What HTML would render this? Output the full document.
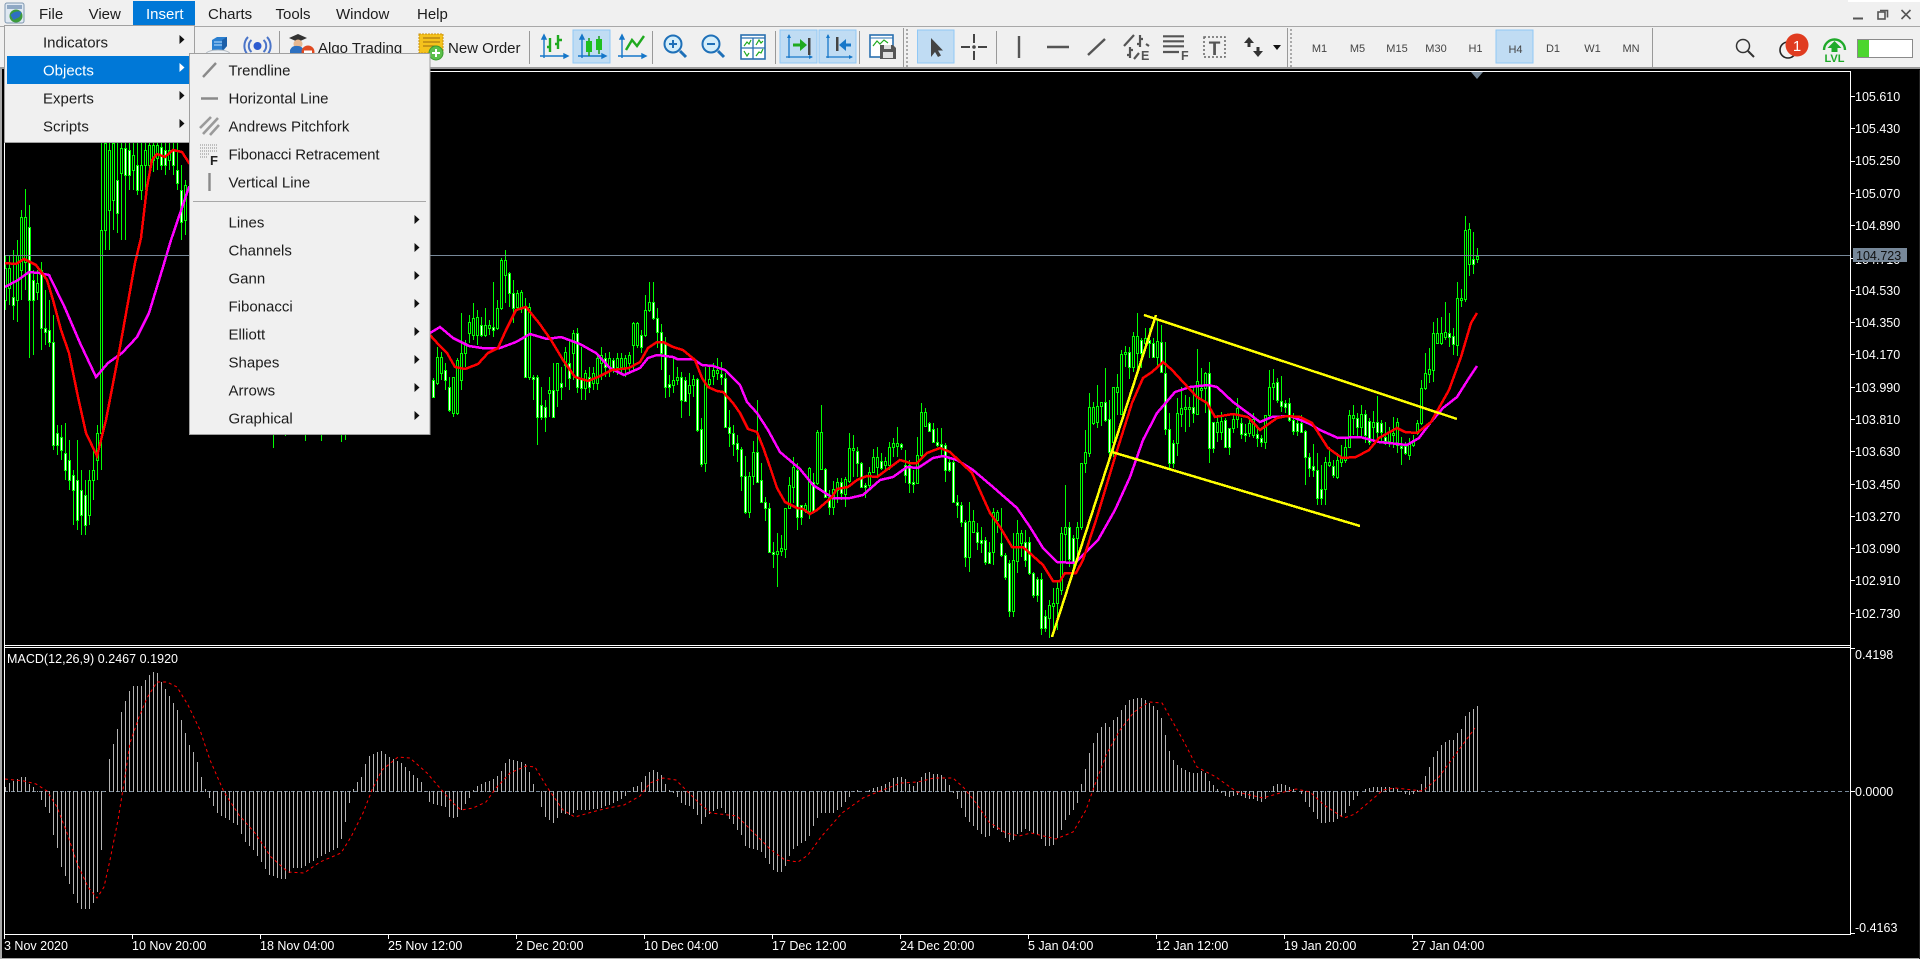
<!DOCTYPE html>
<html lang="en"><head><meta charset="utf-8"><title>MetaTrader</title>
<style>
html,body{margin:0;padding:0;width:1920px;height:959px;overflow:hidden;background:#000}
svg{display:block;position:absolute;left:0;top:0}
text{font-family:"Liberation Sans",sans-serif;white-space:pre}
.m{font-size:15px;fill:#1c1c1c}
.w{font-size:15px;fill:#fff}
.a{font-size:12.5px;fill:#fff}
.f{font-size:11px;fill:#444;text-anchor:middle}
.b{fill:none;stroke:#2a74b4;stroke-width:1.5}
</style></head><body>
<svg xmlns="http://www.w3.org/2000/svg" width="1920" height="959" viewBox="0 0 1920 959">
<defs>
<g id="ax" fill="none" stroke="#1677c9" stroke-width="1.4"><path d="M4 3V25M0 23H27"/><path d="M2 6L4 2L6 6ZM24 21L28 23L24 25Z" fill="#1677c9"/></g>
</defs>
<rect width="1920" height="959" fill="#000"/>
<g id="c"></g>

<!-- frame -->
<g shape-rendering="crispEdges" fill="#fff">
<rect x="4" y="71" width="1847" height="1"/>
<rect x="4" y="71" width="1" height="864"/>
<rect x="4" y="645" width="1846" height="1"/>
<rect x="4" y="647" width="1846" height="1"/>
<rect x="4" y="934" width="1847" height="1"/>
<rect x="1850" y="71" width="1" height="864"/>
<path d="M1851 96h4v1h-4zM1851 128h4v1h-4zM1851 161h4v1h-4zM1851 193h4v1h-4zM1851 225h4v1h-4zM1851 258h4v1h-4zM1851 290h4v1h-4zM1851 322h4v1h-4zM1851 354h4v1h-4zM1851 387h4v1h-4zM1851 419h4v1h-4zM1851 451h4v1h-4zM1851 484h4v1h-4zM1851 516h4v1h-4zM1851 548h4v1h-4zM1851 580h4v1h-4zM1851 613h4v1h-4zM1851 648h4v1h-4zM1851 791h4v1h-4zM1851 933h4v1h-4z"/>
<path d="M4 935h1v4h-1zM132 935h1v4h-1zM260 935h1v4h-1zM388 935h1v4h-1zM516 935h1v4h-1zM644 935h1v4h-1zM772 935h1v4h-1zM900 935h1v4h-1zM1028 935h1v4h-1zM1156 935h1v4h-1zM1284 935h1v4h-1zM1412 935h1v4h-1z"/>
</g>
<rect x="0" y="0" width="2" height="959" fill="#a8a8a8"/>
<rect x="0" y="958" width="1920" height="1" fill="#a8a8a8"/>
<rect x="1919" y="70" width="1" height="889" fill="#222"/>
<polygon points="1471,72 1483,72 1477,79" fill="#778899"/>

<!-- axis labels -->
<g class="a">
<text class="a" x="1855" y="101">105.610</text><text class="a" x="1855" y="133">105.430</text><text class="a" x="1855" y="165">105.250</text><text class="a" x="1855" y="198">105.070</text><text class="a" x="1855" y="230">104.890</text><text class="a" x="1855" y="264">104.710</text><text class="a" x="1855" y="295">104.530</text><text class="a" x="1855" y="327">104.350</text><text class="a" x="1855" y="359">104.170</text><text class="a" x="1855" y="392">103.990</text><text class="a" x="1855" y="424">103.810</text><text class="a" x="1855" y="456">103.630</text><text class="a" x="1855" y="489">103.450</text><text class="a" x="1855" y="521">103.270</text><text class="a" x="1855" y="553">103.090</text><text class="a" x="1855" y="585">102.910</text><text class="a" x="1855" y="618">102.730</text>
<rect x="1853" y="248" width="54" height="14" fill="#778899"/>
<text x="1856" y="260" style="font-size:12.5px;fill:#111">104.723</text>
<text class="a" x="1855" y="659">0.4198</text><text class="a" x="1855" y="796">0.0000</text><text class="a" x="1855" y="932">-0.4163</text>
<text class="a" x="7" y="663" textLength="171">MACD(12,26,9) 0.2467 0.1920</text>
<text class="a" x="4" y="950">3 Nov 2020</text><text class="a" x="132" y="950">10 Nov 20:00</text><text class="a" x="260" y="950">18 Nov 04:00</text><text class="a" x="388" y="950">25 Nov 12:00</text><text class="a" x="516" y="950">2 Dec 20:00</text><text class="a" x="644" y="950">10 Dec 04:00</text><text class="a" x="772" y="950">17 Dec 12:00</text><text class="a" x="900" y="950">24 Dec 20:00</text><text class="a" x="1028" y="950">5 Jan 04:00</text><text class="a" x="1156" y="950">12 Jan 12:00</text><text class="a" x="1284" y="950">19 Jan 20:00</text><text class="a" x="1412" y="950">27 Jan 04:00</text>
</g>

<!-- menu bar + toolbar -->
<rect x="0" y="0" width="1920" height="68" fill="#f0f0f0"/>
<rect x="1848" y="0" width="72" height="2" fill="#fff"/>
<rect x="0" y="26" width="1920" height="1" fill="#a8a8a8"/>
<rect x="0" y="67" width="1920" height="2" fill="#9a9a9a"/>
<rect x="133" y="1" width="62" height="24" fill="#0078d7"/>
<g>
<rect x="5" y="3" width="19" height="20" rx="2" fill="#dfe8f2" stroke="#7f97b0"/>
<rect x="7" y="5" width="15" height="4" fill="#8fa8c4"/>
<circle cx="16" cy="16" r="6.500" fill="#3c9a3c"/><path d="M10.500 15q5-5 11-3l-2 5-6 3z" fill="#2f6fc2"/>
</g>
<text class="m" x="39" y="19">File</text><text class="m" x="88.6" y="19">View</text><text class="w" x="146" y="19">Insert</text><text class="m" x="208" y="19">Charts</text><text class="m" x="275.5" y="19">Tools</text><text class="m" x="336" y="19">Window</text><text class="m" x="417" y="19">Help</text>

<!-- window buttons -->
<g fill="none" stroke="#555" stroke-width="1.6">
<path d="M1853 18.500h10" stroke-width="2"/>
<rect x="1878" y="12" width="7" height="7"/><path d="M1880 10.500h7.500v7"/>
<path d="M1901.500 10l9 9M1910.500 10l-9 9"/>
</g>

<!-- left toolbar -->
<g>
<path d="M212 40l5-3h10v9l-4 5h-11z" fill="#2a7fd0"/><path d="M214 42h8M214 45h8" stroke="#bfe0ff"/><path d="M222 40l5-3v9l-5 5z" fill="#1c5fa8"/>
<ellipse cx="218" cy="54" rx="12" ry="4" fill="#eef2f6" stroke="#b0b8c0"/>
<g fill="none" stroke="#4a74c8" stroke-width="2"><path d="M248 37a13 13 0 0 0 0 18M267 37a13 13 0 0 1 0 18M251.500 40a8 8 0 0 0 0 12M263.500 40a8 8 0 0 1 0 12"/></g>
<circle cx="257.500" cy="46" r="4" fill="#2d5bd0"/>
<rect x="279" y="31" width="1" height="33" fill="#999"/>
<path d="M289 38l9-4 9 4-9 4z" fill="#333"/><circle cx="298" cy="44" r="4.500" fill="#e8b890"/><path d="M290 56v-6q2-5 8-4 5 0 6 6v4z" fill="#2d70c0"/>
<circle cx="308" cy="52" r="6.500" fill="#e04a20"/><rect x="304" y="50.500" width="8" height="3" fill="#fff"/>
<text class="m" x="318" y="53">Algo Trading</text>
<rect x="419" y="34" width="24" height="19" fill="#f5c21c" stroke="#c89010" stroke-dasharray="2 1"/><path d="M423 38h17M423 42h17M423 46h14" stroke="#9a6a10"/>
<circle cx="436" cy="53" r="7" fill="#5cc04a" stroke="#3a9a30"/><path d="M432 53h8M436 49v8" stroke="#fff" stroke-width="2"/>
<text class="m" x="448" y="53">New Order</text>
<rect x="529" y="31" width="1" height="33" fill="#999"/>
<use href="#ax" x="540" y="33"/>
<path d="M550 38v14M547 47h3M558 35v14M558 40h4M555 44h3" stroke="#1faa1f" stroke-width="2.400" fill="none"/>
<rect x="573" y="30" width="37" height="33" fill="#c0dcf3" stroke="#90c8f6"/>
<use href="#ax" x="578" y="33"/>
<path d="M589 38v18M599 36v18" stroke="#1a9a1a" stroke-width="1.500"/><rect x="586" y="41" width="6" height="11" fill="#1fbf1f"/><rect x="596" y="39" width="6" height="11" fill="#1fbf1f"/>
<use href="#ax" x="618" y="33"/>
<path d="M626 50l6-10 5 6 7-10" stroke="#1faa1f" stroke-width="2.400" fill="none"/>
<rect x="652" y="31" width="1" height="33" fill="#999"/>
<circle cx="673" cy="44" r="8.500" fill="#d4eefa" stroke="#1e70b8" stroke-width="2"/><path d="M669 44h8M673 40v8" stroke="#1e70b8" stroke-width="2"/><path d="M680 51l6 6" stroke="#1e70b8" stroke-width="3"/>
<circle cx="711" cy="44" r="8.500" fill="#d4eefa" stroke="#1e70b8" stroke-width="2"/><path d="M707 44h8" stroke="#1e70b8" stroke-width="2"/><path d="M718 51l6 6" stroke="#1e70b8" stroke-width="3"/>
<rect x="741" y="35" width="24" height="24" fill="#fff" stroke="#2a70b0" stroke-width="1.600"/><path d="M741 38h24M753 38v21M741 48h24" stroke="#2a70b0" stroke-width="1.300"/><path d="M744 46l3-4 2 2 2-4M756 45l3-5 2 3 2-2M744 51l3 5 2-3M756 56l3-4 2 1 2-4" stroke="#1faa1f" fill="none" stroke-width="1.200"/>
<rect x="775" y="31" width="1" height="33" fill="#999"/>
<rect x="780" y="30" width="37" height="33" fill="#c0dcf3" stroke="#90c8f6"/>
<rect x="819" y="30" width="37" height="33" fill="#c0dcf3" stroke="#90c8f6"/>
<path d="M789 35v23M786 57h26M826 57h26M828 35v23" stroke="#1677c9" stroke-width="1.300"/><path d="M787 38l2-4 2 4zM809 55l4 2-4 2zM826 38l2-4 2 4zM849 55l4 2-4 2z" fill="#1677c9"/>
<path d="M793 45h9" stroke="#1faa1f" stroke-width="3"/><path d="M800 39l7 6-7 6z" fill="#1faa1f"/><rect x="808" y="38" width="2.500" height="17" fill="#444"/>
<rect x="836" y="37" width="2.500" height="14" fill="#444"/><path d="M843 45h8" stroke="#1677c9" stroke-width="3"/><path d="M846 39l-7 6 7 6z" fill="#1677c9"/>
<rect x="859" y="31" width="1" height="33" fill="#999"/>
<rect x="870" y="35" width="23" height="22" fill="#fff" stroke="#2a70b0" stroke-width="1.600"/><path d="M870 38h23" stroke="#2a70b0"/><path d="M873 46l4-5 3 3 4-4 4 3" stroke="#1faa1f" fill="none" stroke-width="1.200"/>
<path d="M880 45h13l3 3v11h-16z" fill="#555"/><rect x="884" y="45" width="7" height="4" fill="#ddd"/><rect x="883" y="52" width="10" height="6" fill="#ddd"/>
<rect x="903" y="28" width="1" height="39" fill="#999"/>
<path d="M907 29v38" stroke="#aaa" stroke-width="2" stroke-dasharray="2 2"/>
<rect x="917.500" y="30" width="36.500" height="33" fill="#c0dcf3" stroke="#90c8f6"/>
<path d="M931 38v19l4-5 3 5 3-1.500-3-5h5z" fill="#444"/>
<path d="M961 47h9M978 47h9M974 34v9M974 51v9" stroke="#444" stroke-width="2"/><circle cx="974" cy="47" r="1.800" fill="#444"/>
<rect x="996" y="31" width="1" height="33" fill="#999"/>
<path d="M1019 36v22M1047 47h22M1088 55l17-16" stroke="#555" stroke-width="2.400" fill="none"/>
<path d="M1124 46l10-11M1140 35v12M1137 44h3M1140 39h3M1146 44l3 2M1130 47v11M1127 55h3M1130 50h3M1134 59l5-6" stroke="#555" stroke-width="2.200" fill="none"/>
<text x="1141" y="60" style="font-size:12.5px;font-weight:bold;fill:#555">E</text>
<path d="M1163 36.300h21M1163 41.300h21M1163 46.300h21M1163 52h16" stroke="#555" stroke-width="2.200"/>
<text x="1181" y="60" style="font-size:12.5px;font-weight:bold;fill:#555">F</text>
<rect x="1204" y="37" width="21" height="20" fill="none" stroke="#666" stroke-width="1.500" stroke-dasharray="2 2"/>
<text x="1214.500" y="55" text-anchor="middle" style="font-size:19px;font-weight:bold;fill:#555">T</text>
<path d="M1249 47v-6" stroke="#333" stroke-width="3"/><path d="M1244 43l5-6 5 6z" fill="#333"/>
<path d="M1258 47v6" stroke="#333" stroke-width="3"/><path d="M1253 51l5 6 5-6z" fill="#333"/>
<path d="M1273 45h8l-4 5z" fill="#111"/>
<rect x="1287" y="28" width="1" height="39" fill="#999"/>
<path d="M1291 29v38" stroke="#aaa" stroke-width="2" stroke-dasharray="2 2"/>
<rect x="1496" y="30" width="37" height="33" fill="#c0dcf3" stroke="#90c8f6"/>
<text class="f" x="1319.500" y="52">M1</text><text class="f" x="1357.500" y="52">M5</text><text class="f" x="1397" y="52">M15</text><text class="f" x="1436" y="52">M30</text><text class="f" x="1475.500" y="52">H1</text><text class="f" x="1515.500" y="53">H4</text><text class="f" x="1553" y="52">D1</text><text class="f" x="1592.500" y="52">W1</text><text class="f" x="1631" y="52">MN</text>
<rect x="1652" y="28" width="1" height="39" fill="#999"/>
<circle cx="1743" cy="46" r="6.500" fill="none" stroke="#333" stroke-width="1.500"/><path d="M1748 51l6 6" stroke="#333" stroke-width="2"/>
<circle cx="1788" cy="50" r="8" fill="none" stroke="#222" stroke-width="1.600"/>
<circle cx="1797" cy="45" r="11.500" fill="#e03c20"/>
<text x="1797" y="51" text-anchor="middle" style="font-size:15px;fill:#fff">1</text>
<path d="M1824 50a10.500 10.500 0 0 1 21 0" fill="none" stroke="#1faa2a" stroke-width="2.400"/>
<path d="M1834.500 41l7 7h-4v4h-6v-4h-4z" fill="#1faa2a"/>
<text x="1834.500" y="62" text-anchor="middle" style="font-size:11px;font-weight:bold;fill:#1faa2a">LVL</text>
<rect x="1857.500" y="39.500" width="55" height="18" fill="#fff" stroke="#8a8a8a"/>
<rect x="1858" y="40" width="11" height="17" fill="#4cd62e"/>
</g>

<!-- Insert menu -->
<rect x="4.500" y="25.500" width="190" height="117" fill="#f0f0f0" stroke="#a0a0a0"/>
<rect x="7" y="56" width="182" height="28" fill="#0078d7"/>
<text class="m" x="43" y="47.500">Indicators</text>
<text class="w" x="43" y="75.500">Objects</text>
<text class="m" x="43" y="103.500">Experts</text>
<text class="m" x="43" y="131.500">Scripts</text>
<path d="M179.500 35l5 4.500-5 4.500zM179.500 91l5 4.500-5 4.500zM179.500 119l5 4.500-5 4.500z" fill="#111"/>
<path d="M179.500 63l5 4.500-5 4.500z" fill="#fff"/>

<!-- Objects submenu -->
<rect x="189.500" y="53.500" width="240.500" height="381" fill="#f0f0f0" stroke="#a0a0a0"/>
<g>
<path d="M203 77l13-14" stroke="#8a8a8a" stroke-width="2.400"/>
<path d="M201 98.500h17" stroke="#8a8a8a" stroke-width="2.400"/>
<path d="M200 128l11-11M203 134l15-16M210 135l9-10" stroke="#9a9a9a" stroke-width="2.600"/>
<path d="M200 145h18M200 148h18M200 151h18M200 154h10M200 157h8" stroke="#8a8a8a" stroke-dasharray="1 1"/>
<text x="210" y="165" style="font-size:13px;font-weight:bold;fill:#222">F</text>
<path d="M209.500 173v18" stroke="#8a8a8a" stroke-width="2.400"/>
</g>
<text class="m" x="228.500" y="75.500">Trendline</text>
<text class="m" x="228.500" y="103.500" textLength="100">Horizontal Line</text>
<text class="m" x="228.500" y="131.500">Andrews Pitchfork</text>
<text class="m" x="228.500" y="159.500" textLength="151">Fibonacci Retracement</text>
<text class="m" x="228.500" y="187.500">Vertical Line</text>
<rect x="193" y="201" width="233" height="1" fill="#a8a8a8"/>
<text class="m" x="228.500" y="227.500">Lines</text>
<text class="m" x="228.500" y="255.500">Channels</text>
<text class="m" x="228.500" y="283.500">Gann</text>
<text class="m" x="228.500" y="311.500">Fibonacci</text>
<text class="m" x="228.500" y="339.500">Elliott</text>
<text class="m" x="228.500" y="367.500">Shapes</text>
<text class="m" x="228.500" y="395.500">Arrows</text>
<text class="m" x="228.500" y="423.500">Graphical</text>
<path d="M414.500 215l5 4.500-5 4.500zM414.500 243l5 4.500-5 4.500zM414.500 271l5 4.500-5 4.500zM414.500 299l5 4.500-5 4.500zM414.500 327l5 4.500-5 4.500zM414.500 355l5 4.500-5 4.500zM414.500 383l5 4.500-5 4.500zM414.500 411l5 4.500-5 4.500z" fill="#111"/>
</svg>
<script>
(function(){
var s='';
function r(x,y,w,h,f){if(h<=0)return;s+='<rect x="'+x+'" y="'+y+'" width="'+w+'" height="'+h+'" fill="'+f+'"/>';}
var prev=null;
function C(x0,off,k,d){
 var a=d.trim().split(/\s+/);
 for(var i=0;i<a.length;i++){
  var v=a[i].split(',').map(function(n){return Math.round(off+(+n)*k);});
  var x=x0+i*4,hi=v[0],t=v[1],b=v[2],lo=v[3];
  if(b-t<2)b=t+2;
  var mid=(t+b)/2,fill=(prev!==null&&mid>prev)?'#fff':'#000';prev=mid;
  r(x,hi,1,lo-hi,'#0f0');
  r(x-1,t,3,b-t+1,'#0f0');
  r(x,t+1,1,b-t-1,fill);
 }
}
C(5,0,1,"255,268,300,310 255,268,288,305 250,297,305,320 240,255,300,322 210,217,270,300 189,217,262,290 205,227,300,358 270,280,300,355 270,283,292,300 262,270,328,350 290,328,332,345 300,330,342,347 315,342,445,450 425,433,445,455 425,437,450,460 423,453,470,480 440,460,480,490 470,475,490,525 440,480,520,530 470,490,515,535 480,495,525,535 470,480,515,525 450,470,480,500 425,433,460,480 140,230,433,470 140,143,230,250 140,150,210,250 140,143,200,230 140,180,213,233 140,148,173,240 140,148,175,240 140,150,175,190 140,155,170,190 140,165,190,195 140,165,190,200 140,150,165,190 140,145,165,175 140,145,160,172 140,145,158,170 140,147,165,170 140,150,165,175 140,150,160,170 140,150,165,175 140,170,183,190 165,190,222,240 180,185,220,235");
[[273,448],[285,436],[305,441],[321,441],[341,442],[345,440]].forEach(function(p){r(p[0],400,1,p[1]-400,'#0f0');});
C(433,220,1/3,"475,480,530,535 380,410,490,495 395,410,460,480 430,450,480,510 470,500,570,575 470,470,580,590 415,420,580,585 280,400,480,510 360,370,400,440 285,305,340,370 250,295,345,360 270,290,345,375 290,315,345,350 265,315,345,350 300,315,325,345 185,320,330,350 240,265,325,330 115,120,265,270 90,120,165,250 155,160,220,260 180,220,265,310 210,220,262,270 210,215,265,280 235,260,470,475 250,260,470,480 465,470,472,540 465,470,590,675 500,555,590,600 540,560,590,635 470,510,520,590 430,510,590,595 430,430,510,560 440,490,500,540 380,395,435,500 360,430,475,510 330,340,400,480 325,340,500,520 380,475,505,540 450,460,505,540 440,470,500,520 440,460,490,510 400,415,490,510 380,405,430,480 400,415,440,470 395,415,440,470 415,420,445,460 400,415,440,465 400,415,440,465 405,415,440,470 395,405,430,460 305,310,375,450 305,310,375,385");
C(641,270,1/3,"180,195,230,250 75,120,195,200 35,95,120,125 35,97,145,150 115,145,185,235 162,185,250,300 200,220,350,385 315,343,350,380 262,330,345,370 290,320,330,345 305,322,390,443 320,330,393,395 310,345,368,437 315,328,345,380 325,328,480,485 445,478,583,590 290,340,580,607 285,328,342,350 280,300,318,345 265,300,310,330 275,313,322,345 310,323,470,472 420,470,490,530 465,490,522,557 495,520,538,575 530,538,618,662 558,618,727,733 605,618,727,745 513,547,618,645 390,547,635,640 580,630,695,700 680,695,715,752 700,715,845,847 815,845,853,895 790,842,853,952 795,835,843,858 715,715,838,865 620,645,715,717 560,590,650,700 580,600,742,780 705,705,742,765 700,705,718,730 590,595,722,748 610,635,725,730 480,487,640,645 405,487,598,600 595,598,680,685 660,680,712,735 632,658,710,735 625,637,660,700 625,637,670,690 620,628,672,710 490,535,632,640 495,535,540,620 530,543,580,620 575,580,652,655 640,645,652,685 590,607,645,660 537,560,607,610 530,562,590,620 550,572,595,600 560,572,585,600 515,532,585,600 505,518,532,560 472,518,528,560 520,523,530,540 540,585,615,640 570,585,640,668 600,636,640,668 500,555,638,640 400,427,555,560 415,427,467,470 455,460,482,485 460,478,515,518 475,515,525,530 475,523,530,560 520,525,600,635 565,575,600,605 570,575,695,700 675,695,705,745 695,705,757,772 750,757,862,890 695,752,860,905 720,752,787,790 760,787,817,840 770,810,818,850 800,810,877,885 815,847,878,880 715,727,847,885 720,727,750,790");
C(1001,300,1/3,"625,730,765,770 760,765,830,840 780,790,932,950 700,780,932,950 660,700,782,820 690,700,728,770 690,725,780,800 712,727,820,825 815,820,885,895 830,838,885,905 820,838,985,1005 930,948,983,995 900,915,955,1015 865,908,918,1000 845,865,908,990 680,700,870,885 555,682,702,790 665,682,778,800 705,715,785,810 665,680,715,780 490,490,680,690 390,457,490,520 280,320,460,470 305,320,368,375 255,317,365,385 305,307,318,378 205,307,360,365 300,358,457,470 262,262,425,470 222,262,275,345 150,163,342,345 137,155,163,200 140,157,200,238 95,108,200,215 40,107,160,220 115,120,160,205 85,115,130,150 85,120,130,175 115,130,170,175 60,122,172,200 75,125,215,220 125,218,388,405 340,388,490,505 420,428,490,505 295,340,428,468 260,325,342,380 285,322,325,395 290,322,325,380 260,320,340,370 148,242,342,345 205,265,270,300 215,220,265,340 185,220,445,490 365,365,445,460 345,365,397,425 335,362,395,420 355,360,440,445 385,385,440,465 340,358,385,400 295,325,358,385 355,368,403,418 372,400,403,425 358,368,400,410 340,358,405,415 385,403,415,440 405,415,425,440 345,345,425,447 210,262,345,350 208,248,262,300 235,245,300,310 228,302,318,335 300,310,320,340 295,310,360,365 340,360,392,405 355,368,392,408 345,368,395,400 390,392,470,555 460,470,505,530 432,497,510,530 460,510,595,615");
C(1321,200,1/3,"795,868,895,915 770,785,868,915 740,785,795,800 780,797,825,835 760,780,830,838 735,770,785,800 710,740,780,790 630,645,740,745 615,645,655,705 640,655,680,710 615,642,682,710 630,642,705,730 655,663,725,735 632,665,680,720 588,665,695,720 660,670,695,725 665,710,722,735 680,695,722,740 650,700,705,745 655,665,735,760 710,738,741,795 725,738,760,765 715,730,765,780 705,720,735,740 660,668,700,705 540,565,670,675 460,520,565,570 445,508,522,550 365,400,510,545 355,400,428,430 350,398,430,435 305,395,410,420 340,400,410,440 385,408,433,465 245,295,435,467 268,295,298,322 48,90,298,305 70,88,193,228 95,178,193,222 145,168,178,188");
// MACD
function interp(k,x){for(var i=1;i<k.length;i++){if(x<=k[i][0]){var a=k[i-1],b=k[i];return a[1]+(b[1]-a[1])*(x-a[0])/(b[0]-a[0]);}}return k[k.length-1][1];}
var H="5 787,8 783,24 775,28 783,36 790,41 800,49 813,53 835,57 848,61 867,65 876,69 884,77 903,81 909,89 909,93 903,97 892,101 850,104 801,108 763,112 747,116 734,120 715,124 703,128 693,132 686,141 686,145 680,149 675,153 672,157 673,161 682,165 689,171 700,176 708,180 717,184 730,188 743,193 752,197 762,201 777,205 789,209 798,217 813,225 818,237 825,245 842,253 850,261 862,269 875,284 880,292 868,302 868,314 860,326 853,339 847,344 827,348 807,352 791,356 783,360 780,364 766,368 757,372 754,381 751,386 755,392 759,400 762,408 770,412 774,420 780,424 789,428 802,436 805,445 807,449 817,456 819,461 810,468 800,472 791,477 786,486 782,494 779,500 773,504 764,510 758,516 761,524 762,528 768,532 782,537 791,541 807,545 817,553 823,561 813,569 815,577 810,588 810,600 808,608 805,620 800,628 793,632 787,637 786,640 783,648 772,652 770,660 773,664 782,668 789,676 795,680 803,692 807,697 815,700 826,704 818,711 812,720 807,724 812,732 823,741 835,745 846,749 848,760 851,768 862,772 870,780 873,784 869,788 858,793 849,800 843,808 839,812 828,816 819,821 813,833 813,842 806,848 798,852 792,856 790,863 792,871 789,880 786,888 783,892 778,901 777,905 779,912 787,917 782,924 773,928 772,934 774,941 775,948 782,952 792,957 799,961 808,965 817,969 822,976 829,984 837,988 838,993 828,1002 833,1008 842,1012 842,1016 835,1025 829,1033 833,1040 837,1045 846,1052 846,1056 840,1061 830,1065 820,1069 815,1073 810,1077 803,1080 787,1084 773,1088 756,1092 745,1096 735,1101 727,1105 723,1109 727,1113 720,1117 717,1122 708,1126 704,1130 699,1143 698,1147 701,1155 707,1160 714,1164 730,1168 748,1172 758,1176 764,1180 767,1185 770,1189 772,1195 774,1204 770,1208 780,1212 784,1217 789,1223 795,1229 797,1237 795,1246 798,1252 799,1261 802,1267 797,1271 787,1275 784,1284 784,1288 787,1296 790,1300 792,1304 800,1308 806,1312 810,1316 818,1320 823,1332 822,1336 820,1344 815,1348 807,1352 801,1356 797,1360 792,1367 788,1375 787,1383 787,1391 787,1399 790,1404 794,1412 795,1416 792,1421 784,1425 776,1428 769,1432 759,1436 752,1440 746,1445 742,1449 740,1453 740,1457 733,1461 729,1465 716,1469 712,1473 709,1477 706".split(',').map(function(p){return p.split(' ').map(Number);});
s+='<path d="M4 791.5H1850" stroke="#778899" stroke-dasharray="4 3" shape-rendering="crispEdges"/>';
for(var x=5;x<=1477;x+=4){var y=Math.round(interp(H,x));if(y<791)r(x,y,1,791-y+1,'#b4b4b4');else if(y>791)r(x,791,1,y-791,'#b4b4b4');}
function L(p,c,w,e){s+='<polyline points="'+p+'" fill="none" stroke="'+c+'" stroke-width="'+w+'" '+(e||'')+'/>';}
L("5,779 24,781 36,784 47,791 57,807 67,833 77,863 88,887 97,898 104,887 110,860 118,820 124,783 130,743 139,717 147,698 157,682 167,682 177,687 188,705 200,730 210,760 224,792 239,815 255,833 271,857 288,872 304,873 320,862 341,853 351,837 363,813 372,790 382,770 398,757 410,758 427,773 439,787 453,803 461,810 473,808 486,802 496,788 510,773 526,766 535,767 547,787 563,810 575,817 592,812 608,808 624,805 640,796 650,783 663,778 676,780 686,790 699,803 711,813 737,816 751,830 770,849 785,860 798,862 808,855 821,837 842,813 863,798 880,791 901,783 918,782 934,778 953,778 964,788 976,803 989,822 1006,833 1019,836 1031,833 1056,839 1073,832 1086,810 1094,787 1107,753 1120,730 1134,712 1149,702 1162,703 1170,717 1183,740 1197,767 1216,777 1237,792 1263,798 1280,793 1296,789 1310,792 1324,805 1344,818 1355,814 1375,797 1383,790 1395,788 1423,791 1439,777 1455,755 1475,728","#f00",1,'stroke-dasharray="3 3"');
L("5,287 18,280 29,272 39,273 49,275 65,308 80,343 96,377 108,363 122,353 137,337 149,313 163,267 171,240 189,187 300,150 430,333 440,327 453,338 469,346 482,348 500,348 516,342 530,334 547,339 561,337 580,344 596,353 610,368 624,375 640,368 648,358 657,355 673,357 677,359 693,359 702,365 713,366 725,370 740,385 747,402 757,413 768,430 780,452 800,469 813,485 833,498 850,498 863,495 880,480 893,477 907,467 918,468 933,458 943,456 957,460 973,470 993,487 1017,508 1030,527 1043,548 1057,562 1075,563 1098,540 1115,510 1130,477 1143,440 1157,413 1175,392 1190,387 1208,385 1217,387 1233,402 1260,422 1272,417 1290,416 1310,424 1320,430 1338,438 1360,437 1379,442 1407,445 1419,438 1431,422 1443,408 1457,397 1469,378 1477,366","#f0f",2.5,'shape-rendering="crispEdges"');
L("5,263 16,264 24,259 36,265 47,280 53,300 61,330 69,353 78,397 86,433 97,456 106,420 120,347 135,263 141,238 147,187 152,160 157,154 165,157 173,150 182,152 189,163 300,150 430,335 439,345 447,353 455,367 465,369 478,364 488,353 498,348 506,330 516,310 526,307 539,323 551,340 563,360 575,377 588,381 598,377 612,370 629,368 640,362 648,348 657,342 663,342 673,347 683,350 695,360 702,378 708,387 717,391 723,392 733,403 740,413 748,429 757,432 763,447 770,467 777,488 785,502 797,508 803,509 810,514 817,510 832,497 837,489 848,487 857,480 867,476 877,477 900,460 910,463 917,463 927,453 940,448 950,452 972,473 990,513 1000,527 1012,547 1023,547 1043,565 1053,581 1060,581 1065,573 1076,573 1083,560 1097,517 1115,457 1132,403 1143,378 1152,372 1163,362 1172,370 1183,382 1197,397 1207,403 1215,417 1233,414 1248,417 1260,430 1277,418 1287,416 1300,417 1312,423 1328,448 1342,458 1356,457 1369,450 1379,438 1397,428 1405,432 1417,433 1431,422 1449,390 1461,357 1471,323 1477,313","#f00",2.5,'shape-rendering="crispEdges"');
s+='<g stroke="#ff0" stroke-width="2.500" shape-rendering="crispEdges"><path d="M1052 637L1156 315M1144 315L1457 419M1112 452L1360 526"/></g>';
s+='<rect x="5" y="255" width="1845" height="1" fill="#778899"/>';
document.getElementById('c').innerHTML=s;
})();
</script>
</body></html>
